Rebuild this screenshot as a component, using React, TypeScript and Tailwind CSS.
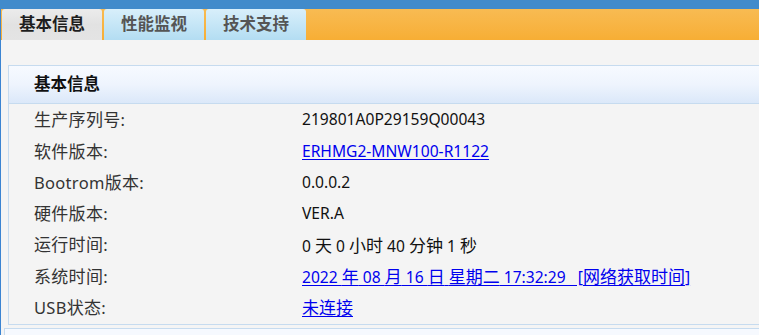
const rows: { label: string; value: string; link?: boolean }[] = [
  { label: '生产序列号:', value: '219801A0P29159Q00043' },
  { label: '软件版本:', value: 'ERHMG2-MNW100-R1122', link: true },
  { label: 'Bootrom版本:', value: '0.0.0.2' },
  { label: '硬件版本:', value: 'VER.A' },
  { label: '运行时间:', value: '0 天 0 小时 40 分钟 1 秒' },
  { label: '系统时间:', value: '2022 年 08 月 16 日 星期二 17:32:29\u00a0\u00a0\u00a0[网络获取时间]', link: true },
  { label: 'USB状态:', value: '未连接', link: true },
];

const tabs = ['基本信息', '性能监视', '技术支持'];

// CJK glyphs render a touch larger than the latin ones in the original
function Mixed({ text }: { text: string }) {
  const parts = text.split(/([\u4e00-\u9fff]+)/);
  return (
    <>
      {parts.map((p, i) =>
        /[\u4e00-\u9fff]/.test(p) ? (
          <span key={i} className="text-[17px]">
            {p}
          </span>
        ) : (
          <span key={i}>{p}</span>
        )
      )}
    </>
  );
}

export default function App() {
  return (
    <div
      className="w-[759px] h-[335px] overflow-hidden bg-[#f4f4f4] text-[16.5px]"
      style={{ fontFamily: '"Noto Sans", "Noto Sans CJK SC", sans-serif' }}
    >
      <div className="h-[9px] bg-[#418bcb]" />
      <div className="border-l border-[#3b84d2] h-[326px]">
        {/* tab strip */}
        <div className="flex gap-[2px] pl-[1px] h-[31px] bg-gradient-to-b from-[#f8bb52] to-[#f7ae34]">
          {tabs.map((t, i) => (
            <div
              key={t}
              className={`w-[100px] flex items-center justify-center rounded-t-[3px] font-bold leading-none ${
                i === 0
                  ? 'bg-gradient-to-b from-[#ececec] via-[#e2e2e2] to-[#e4e4e4] text-[#1e1e1e]'
                  : 'bg-gradient-to-b from-[#d8effb] to-[#b3ddf2] text-[#555]'
              }`}
            >
              {t}
            </div>
          ))}
        </div>

        <div className="pt-[25px] pl-[7px]">
          <div className="border-l border-t border-b border-[#c6dbef]">
            <div className="h-[38px] flex items-center pl-[25px] border-b border-[#c6dbef] bg-gradient-to-b from-[#f7faff] via-[#eef4fd] to-[#dbe8f9] font-bold text-[#111]">
              基本信息
            </div>
            <div className="py-[0.5px]">
              {rows.map((r) => (
                <div key={r.label} className="flex items-center h-[31.3px]">
                  <div className="w-[293px] pl-[25px] text-[#333] whitespace-nowrap tracking-[0.3px]">
                    <Mixed text={r.label} />
                  </div>
                  <div className="whitespace-nowrap text-[15.6px]">
                    {r.link ? (
                      <a href="#" className="text-[#0000ee] underline underline-offset-2">
                        <Mixed text={r.value} />
                      </a>
                    ) : (
                      <span className="text-[#111]">
                        <Mixed text={r.value} />
                      </span>
                    )}
                  </div>
                </div>
              ))}
            </div>
          </div>
          <div className="mt-[3px] -ml-[4px] h-[20px] border-l border-t border-[#c6dbef] bg-[#f6f9fe]" />
        </div>
      </div>
    </div>
  );
}
